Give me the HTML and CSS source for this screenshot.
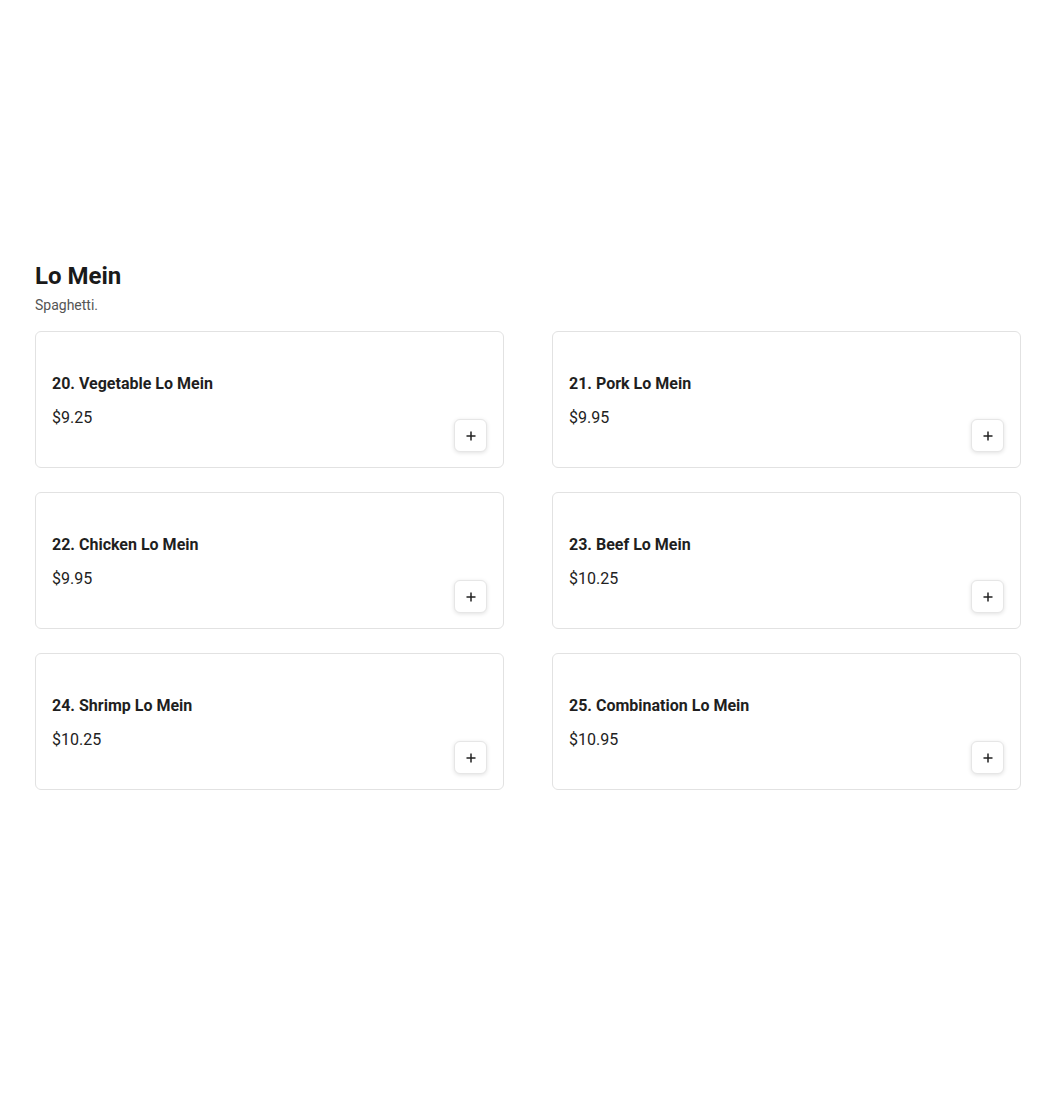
FILE: index.html
```html
<!DOCTYPE html>
<html lang="en">
<head>
  <meta charset="UTF-8">
  <meta name="viewport" content="width=device-width, initial-scale=1.0">
  <title>Lo Mein</title>
  <link rel="stylesheet" href="styles.css">
</head>
<body>
  <section class="menu-section">
    <h2 class="section-title">Lo Mein</h2>
    <p class="section-desc">Spaghetti.</p>

    <div class="item-grid">
      <div class="item-card">
        <div class="item-info">
          <h3 class="item-name">20. Vegetable Lo Mein</h3>
          <p class="item-price">$9.25</p>
        </div>
        <button class="add-btn" aria-label="Add">
          <svg width="12" height="12" viewBox="0 0 12 12"><path d="M6 1.5v9M1.5 6h9" stroke="#222" stroke-width="1.5" fill="none"/></svg>
        </button>
      </div>
      <div class="item-card">
        <div class="item-info">
          <h3 class="item-name">21. Pork Lo Mein</h3>
          <p class="item-price">$9.95</p>
        </div>
        <button class="add-btn" aria-label="Add">
          <svg width="12" height="12" viewBox="0 0 12 12"><path d="M6 1.5v9M1.5 6h9" stroke="#222" stroke-width="1.5" fill="none"/></svg>
        </button>
      </div>
      <div class="item-card">
        <div class="item-info">
          <h3 class="item-name">22. Chicken Lo Mein</h3>
          <p class="item-price">$9.95</p>
        </div>
        <button class="add-btn" aria-label="Add">
          <svg width="12" height="12" viewBox="0 0 12 12"><path d="M6 1.5v9M1.5 6h9" stroke="#222" stroke-width="1.5" fill="none"/></svg>
        </button>
      </div>
      <div class="item-card">
        <div class="item-info">
          <h3 class="item-name">23. Beef Lo Mein</h3>
          <p class="item-price">$10.25</p>
        </div>
        <button class="add-btn" aria-label="Add">
          <svg width="12" height="12" viewBox="0 0 12 12"><path d="M6 1.5v9M1.5 6h9" stroke="#222" stroke-width="1.5" fill="none"/></svg>
        </button>
      </div>
      <div class="item-card">
        <div class="item-info">
          <h3 class="item-name">24. Shrimp Lo Mein</h3>
          <p class="item-price">$10.25</p>
        </div>
        <button class="add-btn" aria-label="Add">
          <svg width="12" height="12" viewBox="0 0 12 12"><path d="M6 1.5v9M1.5 6h9" stroke="#222" stroke-width="1.5" fill="none"/></svg>
        </button>
      </div>
      <div class="item-card">
        <div class="item-info">
          <h3 class="item-name">25. Combination Lo Mein</h3>
          <p class="item-price">$10.95</p>
        </div>
        <button class="add-btn" aria-label="Add">
          <svg width="12" height="12" viewBox="0 0 12 12"><path d="M6 1.5v9M1.5 6h9" stroke="#222" stroke-width="1.5" fill="none"/></svg>
        </button>
      </div>
    </div>
  </section>
</body>
</html>
```

FILE: styles.css
```css
body {
  font-family: Roboto, "Noto Sans", Arial, sans-serif;
  margin: 0;
  padding: 0;
  background-color: #fff;
  color: #1a1a1a;
}
.menu-section {
  width: 986px;
  margin-left: 35px;
  padding-top: 260px;
}
.section-title {
  margin: 0;
  font-size: 24px;
  line-height: 32px;
  font-weight: 700;
  color: #1a1a1a;
}
.section-desc {
  margin: 3px 0 16px;
  font-size: 14px;
  line-height: 20px;
  color: #555;
}
.item-grid {
  display: grid;
  grid-template-columns: 1fr 1fr;
  column-gap: 48px;
  row-gap: 24px;
}
.item-card {
  display: flex;
  justify-content: space-between;
  align-items: flex-end;
  height: 137px;
  box-sizing: border-box;
  padding: 16px 16px 15px;
  border: 1px solid #e2e2e2;
  border-radius: 6px;
  background: #fff;
}
.item-info {
  align-self: center;
  padding-top: 2px;
}
.item-name {
  margin: 0;
  font-size: 16px;
  line-height: 24px;
  font-weight: 700;
  color: #1f1f1f;
}
.item-price {
  margin: 10px 0 0;
  font-size: 16px;
  line-height: 24px;
  color: #222;
}
.add-btn {
  display: flex;
  align-items: center;
  justify-content: center;
  width: 33px;
  height: 33px;
  padding: 0;
  border: 1px solid #e6e6e6;
  border-radius: 6px;
  background: #fff;
  box-shadow: 0 1px 4px rgba(0, 0, 0, 0.12);
  cursor: pointer;
}
```
